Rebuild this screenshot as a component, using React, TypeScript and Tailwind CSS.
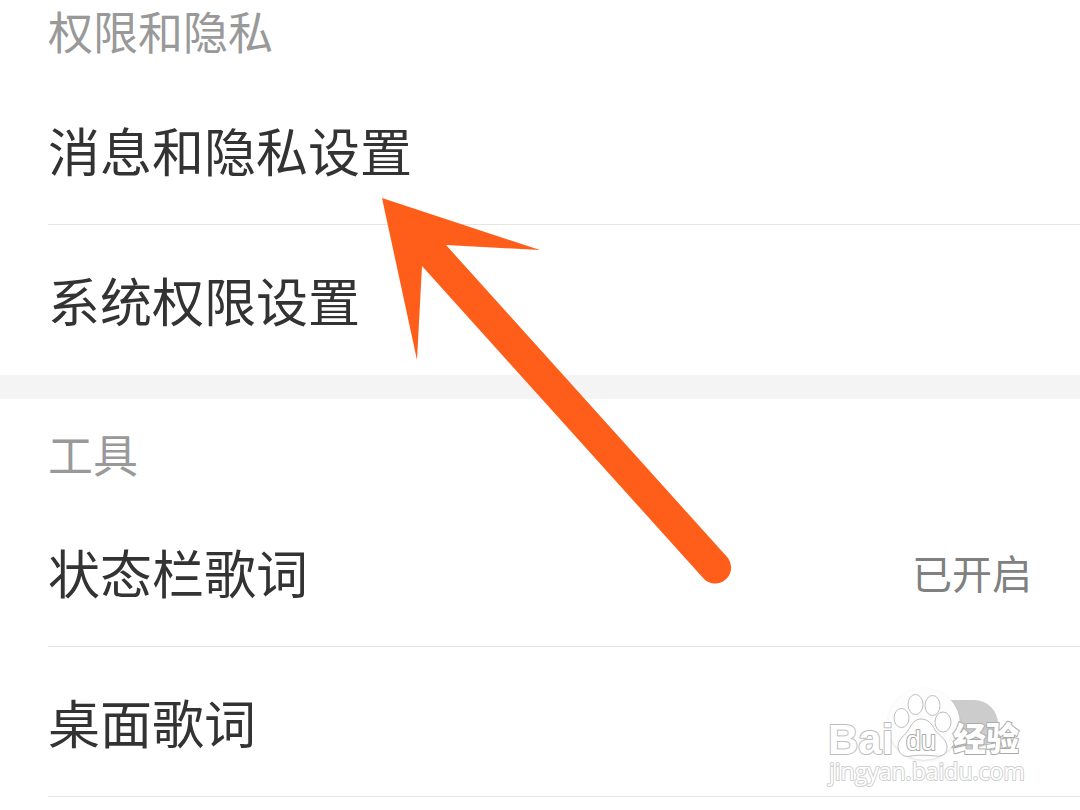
import type { ReactNode } from 'react'

interface SettingRowProps {
  label: string
  htmlFor?: string
  divider?: boolean
  children?: ReactNode
}

function SectionTitle({ children }: { children: ReactNode }) {
  return <h2 className="px-12 text-[45px] leading-[62px] text-[#999999]">{children}</h2>
}

function SettingRow({ label, htmlFor, divider = true, children }: SettingRowProps) {
  return (
    <li className="pl-12">
      <div
        className={`flex h-[150px] items-center justify-between pr-12 ${
          divider ? 'border-b border-[#e5e5e5]' : ''
        }`}
      >
        {htmlFor ? (
          <label htmlFor={htmlFor}>{label}</label>
        ) : (
          <button type="button" className="flex-1 cursor-pointer text-left">
            {label}
          </button>
        )}
        {children}
      </div>
    </li>
  )
}

function PointerArrow() {
  return (
    <svg
      className="pointer-events-none absolute top-[196px] left-[380px]"
      width="354"
      height="390"
      viewBox="380 196 354 390"
      aria-hidden="true"
    >
      <path
        fill="#ff5e1a"
        d="M382 198 L540 250 L446 245 L728 558 A16 16 0 0 1 704 579 L422 266 L417 360 Z"
      />
    </svg>
  )
}

function Watermark() {
  return (
    <svg
      className="pointer-events-none absolute top-[686px] right-[54px]"
      width="202"
      height="106"
      viewBox="824 686 202 106"
      role="img"
      aria-label="Baidu 经验"
      fill="#ffffff"
      stroke="#bdbdbd"
      strokeWidth="1"
      strokeLinejoin="round"
    >
      <text
        x="828"
        y="754"
        fontSize="42"
        fontWeight="700"
        fontFamily="'Liberation Sans', Arial, sans-serif"
        paintOrder="stroke"
        strokeWidth="2"
      >
        Bai
      </text>
      <text
        x="953"
        y="751"
        fontSize="33"
        fontWeight="900"
        fontFamily="'Noto Sans CJK SC', sans-serif"
        paintOrder="stroke"
        strokeWidth="2"
        stroke="#aaaaaa"
      >
        经验
      </text>
      <ellipse cx="901.5" cy="718" rx="7.5" ry="9.5" />
      <ellipse cx="915.5" cy="704.5" rx="7.5" ry="10" />
      <ellipse cx="932.5" cy="705.5" rx="7.5" ry="10" />
      <ellipse cx="943" cy="722" rx="8" ry="10" />
      <path d="M921 719 C928 719 932 724 935 730 C939 736 947 739 947 747 C947 754 942 757 935 756 C928 755 917 755 911 756 C903 758 898 753 898 746 C898 739 906 735 909 729 C912 724 915 719 921 719 Z" />
      <text
        x="906"
        y="750"
        fontSize="27"
        fontFamily="'Liberation Sans', Arial, sans-serif"
        paintOrder="stroke"
        strokeWidth="2"
        stroke="#aaaaaa"
      >
        du
      </text>
      <text
        x="829"
        y="780"
        fontSize="23"
        fontFamily="'Open Sans', sans-serif"
        paintOrder="stroke"
        strokeWidth="2"
        stroke="#d0d0d0"
      >
        jingyan.baidu.com
      </text>
    </svg>
  )
}

export default function App() {
  return (
    <div className="relative min-h-screen overflow-hidden bg-white font-['Noto_Sans_CJK_SC',sans-serif] text-[52px] leading-[76px] text-[#333333]">
      <section>
        <SectionTitle>权限和隐私</SectionTitle>
        <ul className="pt-[13px]">
          <SettingRow label="消息和隐私设置" />
          <SettingRow label="系统权限设置" divider={false} />
        </ul>
      </section>

      <div className="h-6 bg-[#f4f4f4]" />

      <section className="pt-6">
        <SectionTitle>工具</SectionTitle>
        <ul className="pt-3">
          <SettingRow label="状态栏歌词">
            <span className="text-[40px] text-[#808080]">已开启</span>
          </SettingRow>
          <SettingRow label="桌面歌词" htmlFor="desktop-lyrics">
            <input
              id="desktop-lyrics"
              type="checkbox"
              role="switch"
              className="relative mt-1 mr-[34px] h-12 w-[86px] cursor-pointer appearance-none rounded-full bg-[#cccccc] before:absolute before:-top-3 before:-left-6 before:size-[72px] before:rounded-full before:bg-[#fdfdfd] before:shadow-sm"
            />
          </SettingRow>
        </ul>
      </section>

      <PointerArrow />
      <Watermark />
    </div>
  )
}
